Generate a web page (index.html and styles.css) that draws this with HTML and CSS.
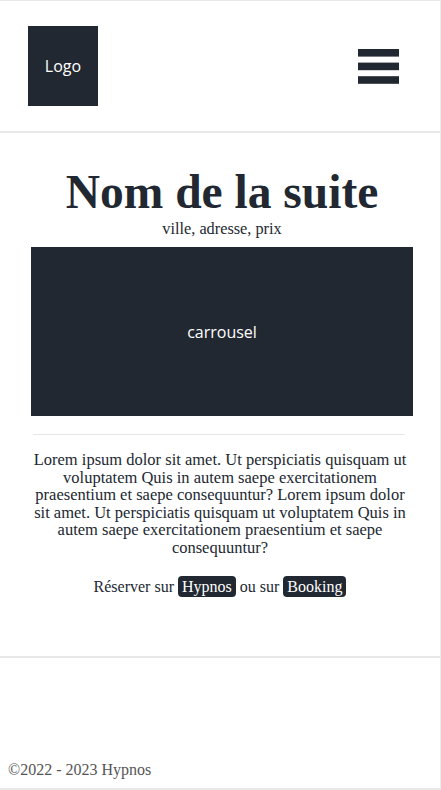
FILE: index.html
```html
<!DOCTYPE html>
<html lang="fr">
<head>
<meta charset="utf-8">
<title>Nom de la suite</title>
<link rel="stylesheet" href="styles.css">
</head>
<body>
<div class="page">
  <header class="site-header">
    <div class="logo">Logo</div>
    <button class="menu-toggle" aria-label="Menu">
      <svg width="41" height="35" viewBox="0 0 41 35" aria-hidden="true">
        <rect x="0" y="0" width="41" height="7.6" fill="#222831"/>
        <rect x="0" y="13.6" width="41" height="7.6" fill="#222831"/>
        <rect x="0" y="27.2" width="41" height="7.6" fill="#222831"/>
      </svg>
    </button>
  </header>
  <main class="suite">
    <h1 class="suite-title">Nom de la suite</h1>
    <p class="suite-meta">ville, adresse, prix</p>
    <div class="carousel">carrousel</div>
    <hr class="divider">
    <p class="suite-desc">Lorem ipsum dolor sit amet. Ut perspiciatis quisquam ut voluptatem Quis in autem saepe exercitationem praesentium et saepe consequuntur? Lorem ipsum dolor sit amet. Ut perspiciatis quisquam ut voluptatem Quis in autem saepe exercitationem praesentium et saepe consequuntur?</p>
    <p class="suite-book">Réserver sur <a class="badge" href="#">Hypnos</a> ou sur <a class="badge" href="#">Booking</a></p>
  </main>
  <footer class="site-footer">
    <span>©2022 - 2023 Hypnos</span>
  </footer>
</div>
</body>
</html>
```
FILE: styles.css
```css
* { box-sizing: border-box; }

html, body {
  margin: 0;
  padding: 0;
  background: #ffffff;
}

body {
  font-family: "Liberation Serif", "Times New Roman", serif;
  color: #212529;
}

.page {
  min-height: 100vh;
  display: flex;
  flex-direction: column;
  border-top: 1px solid #e8e8e8;
  border-right: 1px solid #ececec;
  border-bottom: 2px solid #e8e8e8;
}

.site-header {
  display: flex;
  align-items: center;
  justify-content: space-between;
  padding: 25px 41px 25px 28px;
  border-bottom: 2px solid #e8e8e8;
}

.logo {
  width: 70px;
  height: 80px;
  background: #222831;
  color: #ffffff;
  font-family: "Open Sans", "Noto Sans", sans-serif;
  font-size: 16px;
  display: flex;
  align-items: center;
  justify-content: center;
}

.menu-toggle {
  border: 0;
  padding: 0;
  margin: 0;
  background: none;
  display: flex;
  cursor: pointer;
}

.suite {
  padding: 32px 27px 59px 31px;
  border-bottom: 2px solid #e8e8e8;
  text-align: center;
}

.suite-title {
  margin: 0;
  font-size: 47.5px;
  line-height: 54px;
  font-weight: 700;
  color: #222831;
}

.suite-meta {
  margin: 0;
  font-size: 16.3px;
  line-height: 20px;
  color: #222831;
}

.carousel {
  margin-top: 8px;
  height: 169px;
  background: #222831;
  color: #ffffff;
  font-family: "Open Sans", "Noto Sans", sans-serif;
  font-size: 16px;
  display: flex;
  align-items: center;
  justify-content: center;
}

.divider {
  margin: 18px 8px 0 2px;
  border: 0;
  border-top: 1px solid #e6e6e6;
  height: 0;
}

.suite-desc {
  margin: 16px 4px 0 0;
  font-size: 16.5px;
  line-height: 17.5px;
  color: #222831;
}

.suite-book {
  margin: 20px 4px 0 0;
  font-size: 16px;
  line-height: 21px;
  color: #222831;
}

.badge {
  display: inline-block;
  padding: 0 4px;
  border-radius: 4px;
  background: #222831;
  color: #ffffff;
  text-decoration: none;
  line-height: 21px;
}

.site-footer {
  flex: 1;
  display: flex;
  align-items: flex-end;
  padding: 0 8px 8px;
  font-size: 16px;
  line-height: 20px;
  color: #555555;
}
```
